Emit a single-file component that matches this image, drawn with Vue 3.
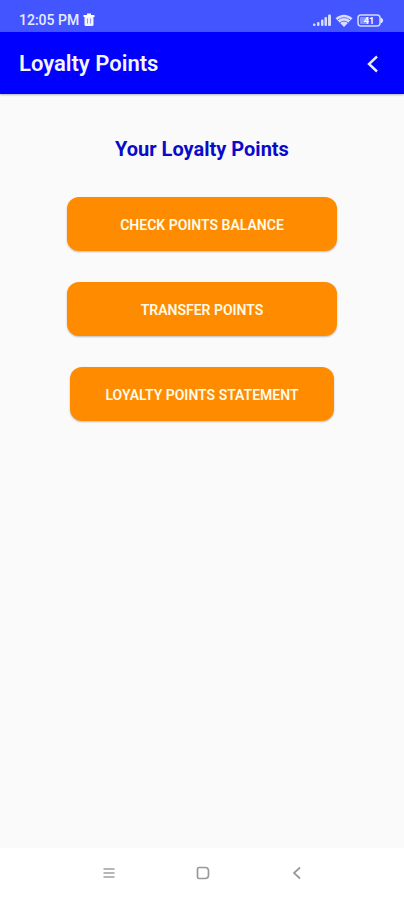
<script setup>
const actions = [
  { id: 'balance', label: 'Check points balance' },
  { id: 'transfer', label: 'Transfer points' },
  { id: 'statement', label: 'Loyalty points statement', narrow: true },
]
</script>

<template>
  <div class="screen">
    <div class="status">
      <div class="status-group">
        <span class="time">12:05 PM</span>
        <svg class="trash" viewBox="0 0 12 14" width="12" height="14" aria-hidden="true">
          <path d="M4 2V0.500h4V2h3.500v2H0.500V2z" fill="#fff" />
          <path d="M1.500 4h9v7.500a1.500 1.500 0 0 1-1.500 1.500h-6A1.500 1.500 0 0 1 1.500 11.500z" fill="#f2f3ff" />
          <path d="M4.500 5.500v5M7.500 5.500v5" stroke="#8c94fa" stroke-width="1" />
        </svg>
      </div>
      <div class="status-group">
        <svg viewBox="0 0 18 12" width="18" height="12" aria-hidden="true">
          <g fill="#d6daff">
            <rect x="0" y="9.500" width="2.500" height="2.500" rx="1" />
            <rect x="4" y="8" width="2.500" height="4" rx="1" />
            <rect x="8" y="5.500" width="2.500" height="6.500" rx="1" />
            <rect x="11.500" y="3" width="2.500" height="9" rx="1" />
            <rect x="15" y="0.500" width="3" height="11.500" rx="1" />
          </g>
        </svg>
        <svg viewBox="0 0 18 13" width="18" height="13" aria-hidden="true">
          <path d="M0.500 4.300C5.500-.6 12.500-.6 17.500 4.300L9 13z" fill="#d9dcff" />
          <path d="M2.500 6.200c4-3.400 9-3.400 13 0M5 8.700c2.500-2 5.500-2 8 0" fill="none" stroke="#6a73fb" stroke-width="1" />
        </svg>
        <svg class="battery" viewBox="0 0 27 13" width="27" height="13" role="img" aria-label="Battery 41">
          <rect x="1" y="1" width="22" height="11" rx="3" fill="none" stroke="#d6daff" stroke-width="1.500" />
          <path d="M23.500 3.500c3.500 1 3.500 5 0 6z" fill="#dfe2ff" />
          <rect x="3" y="3" width="9" height="7" rx="1" fill="#8790ff" />
          <text x="12" y="10" text-anchor="middle">41</text>
        </svg>
      </div>
    </div>

    <header class="bar">
      <h1>Loyalty Points</h1>
      <button class="back" type="button" aria-label="Back">
        <svg viewBox="0 0 12 18" width="12" height="18" aria-hidden="true">
          <path d="M10 1.500L2 9l8 7.500" fill="none" stroke="#e8e8ff" stroke-width="2.400" />
        </svg>
      </button>
    </header>

    <main class="content">
      <h2>Your Loyalty Points</h2>
      <div class="actions">
        <button
          v-for="action in actions"
          :key="action.id"
          type="button"
          class="action"
          :class="{ narrow: action.narrow }"
        >
          {{ action.label }}
        </button>
      </div>
    </main>

    <nav class="system">
      <button type="button" aria-label="Recent apps">
        <svg viewBox="0 0 14 14" width="14" height="14" aria-hidden="true">
          <path d="M1.500 3h11M1.500 7h11M1.500 11h11" stroke="#a0a0a0" stroke-width="1.600" />
        </svg>
      </button>
      <button type="button" aria-label="Home">
        <svg viewBox="0 0 14 14" width="14" height="14" aria-hidden="true">
          <path d="M3 1.500h6q3.500 0 3.500 3.500v4q0 3.500-3.500 3.500H3q-1.500 0-1.500-1.500V3Q1.500 1.500 3 1.500z" fill="none" stroke="#999" stroke-width="1.700" />
        </svg>
      </button>
      <button type="button" aria-label="Go back">
        <svg viewBox="0 0 14 14" width="14" height="14" aria-hidden="true">
          <path d="M10 1.500L4 7l6 5.500" fill="none" stroke="#999" stroke-width="1.700" />
        </svg>
      </button>
    </nav>
  </div>
</template>

<style>
body {
  margin: 0;
  background: #fff;
}
</style>

<style scoped>
.screen {
  display: flex;
  flex-direction: column;
  min-height: 100vh;
  background: #fafafa;
  font-family: Roboto, sans-serif;
}

button {
  border: 0;
  font-family: inherit;
  cursor: pointer;
}

svg {
  display: block;
}

.status {
  display: flex;
  align-items: center;
  justify-content: space-between;
  box-sizing: border-box;
  height: 32px;
  padding: 8px 20px 0 19px;
  background: #4355ff;
  color: #e8eaff;
}

.status-group {
  display: flex;
  align-items: center;
  gap: 4px;
}

.time {
  font-size: 14px;
  line-height: 16px;
  font-weight: 500;
}

.battery text {
  font-size: 9px;
  font-weight: 700;
  fill: #fff;
}

.bar {
  display: flex;
  align-items: center;
  justify-content: space-between;
  box-sizing: border-box;
  height: 62px;
  padding: 2px 20px 0 19px;
  background: #0000fe;
  box-shadow: 0 1px 2px rgba(0, 0, 60, 0.3);
}

.bar h1 {
  margin: 0;
  color: #f4f4ff;
  font-size: 22px;
  line-height: 28px;
  font-weight: 600;
}

.back {
  padding: 0 5px;
  background: none;
}

.content {
  flex: 1;
  padding: 43px 16px 32px;
}

h2 {
  margin: 0 0 36px;
  color: #0a0acb;
  font-size: 20px;
  line-height: 24px;
  font-weight: 700;
  text-align: center;
}

.actions {
  display: flex;
  flex-direction: column;
  align-items: center;
  gap: 31px;
}

.action {
  width: 72.5%;
  min-height: 54px;
  padding: 2px 16px 0;
  border-radius: 12px;
  background: #ff8c00;
  color: #fffbe8;
  font-size: 14px;
  line-height: 16px;
  font-weight: 600;
  text-transform: uppercase;
  box-shadow: 0 1px 2px rgba(0, 0, 0, 0.25);
}

.action.narrow {
  width: 71%;
}

.system {
  display: flex;
  justify-content: center;
  gap: 80px;
  padding: 18px 0 20px 2px;
  background: #fff;
}

.system button {
  padding: 0;
  background: none;
}
</style>
